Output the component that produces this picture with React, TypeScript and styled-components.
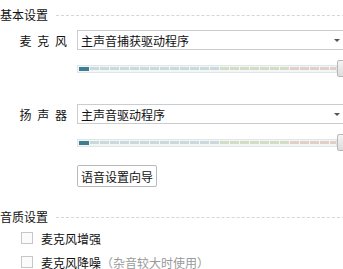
import React from "react";
import styled, { createGlobalStyle } from "styled-components";

const GlobalStyle = createGlobalStyle`
  html, body {
    margin: 0;
    padding: 0;
    background: #ffffff;
    overflow: hidden;
  }
  body {
    font-family: "Noto Sans CJK SC", "Liberation Sans", sans-serif;
    font-size: 12px;
    color: #111111;
  }
`;

const SEGMENTS = 26;

// colour of each faint segment drifts from blue-grey to green to pink
const segmentColor = (i: number) => {
  const t = i / (SEGMENTS - 1);
  if (t < 0.5) return "#c9d9dc";
  if (t < 0.8) return "#d3dcc4";
  return "#e2cfc8";
};

const LevelMeter = () => (
  <MeterRow>
    <Meter>
      <Active />
      {Array.from({ length: SEGMENTS }).map((_, i) => (
        <Segment key={i} style={{ background: segmentColor(i) }} />
      ))}
    </Meter>
    <Thumb />
  </MeterRow>
);

export default function App() {
  return (
    <>
      <GlobalStyle />
      <Page>
        <SectionHead>
          <HeadTitle>基本设置</HeadTitle>
          <Dashes />
        </SectionHead>

        <DeviceRow>
          <Label>麦 克 风</Label>
          <Select>
            <span>主声音捕获驱动程序</span>
            <Arrow />
          </Select>
        </DeviceRow>
        <LevelMeter />

        <DeviceRow $top={27}>
          <Label>扬 声 器</Label>
          <Select>
            <span>主声音驱动程序</span>
            <Arrow />
          </Select>
        </DeviceRow>
        <LevelMeter />

        <ButtonRow>
          <WizardButton>语音设置向导</WizardButton>
        </ButtonRow>

        <SectionHead $top={20}>
          <HeadTitle>音质设置</HeadTitle>
          <Dashes />
        </SectionHead>

        <CheckRow>
          <Box />
          <span>麦克风增强</span>
        </CheckRow>
        <CheckRow>
          <Box />
          <span>麦克风降噪</span>
          <Hint>（杂音较大时使用）</Hint>
        </CheckRow>
      </Page>
    </>
  );
}

const Page = styled.div`
  width: 360px;
  padding-top: 5px;
`;

const SectionHead = styled.div<{ $top?: number }>`
  display: flex;
  align-items: center;
  gap: 8px;
  height: 18px;
  margin-top: ${(p) => p.$top ?? 0}px;
`;

const HeadTitle = styled.span`
  white-space: nowrap;
`;

const Dashes = styled.div`
  flex: 1;
  border-top: 1px dashed #d6d6d6;
  margin-top: 2px;
`;

const DeviceRow = styled.div<{ $top?: number }>`
  display: flex;
  align-items: center;
  margin-top: ${(p) => p.$top ?? 7}px;
`;

const Label = styled.span`
  width: 67px;
  text-align: right;
  padding-right: 10px;
  box-sizing: content-box;
  white-space: pre;
  word-spacing: 3px;
`;

const Select = styled.div`
  width: 274px;
  height: 20px;
  box-sizing: border-box;
  border: 1px solid #c9cdd0;
  border-right: none;
  background: #ffffff;
  display: flex;
  align-items: center;
  justify-content: space-between;
  padding: 0 11px 0 3px;
`;

const Arrow = styled.span`
  width: 0;
  height: 0;
  border-left: 3px solid transparent;
  border-right: 3px solid transparent;
  border-top: 3px solid #555;
`;

const MeterRow = styled.div`
  display: flex;
  align-items: center;
  margin: 10px 0 0 77px;
  height: 17px;
`;

const Meter = styled.div`
  width: 260px;
  height: 8px;
  box-sizing: border-box;
  border: 1px solid #dfe6e8;
  background: #f3f6f6;
  display: flex;
  align-items: center;
  gap: 1px;
  padding: 0 1px;
  overflow: hidden;
`;

const Active = styled.div`
  flex: 0 0 10px;
  height: 4px;
  background: #3d7f91;
`;

const Segment = styled.div`
  flex: 0 0 9px;
  height: 3px;
`;

const Thumb = styled.div`
  width: 8px;
  height: 17px;
  box-sizing: border-box;
  border: 1px solid #b8b8b8;
  border-radius: 2px;
  background: linear-gradient(#f4f4f4, #dcdcdc);
`;

const ButtonRow = styled.div`
  margin: 14px 0 0 77px;
`;

const WizardButton = styled.button`
  font: inherit;
  color: #111111;
  height: 22px;
  padding: 0 3px;
  border: 1px solid #b9b9b9;
  border-radius: 2px;
  background: #ffffff;
`;

const CheckRow = styled.div`
  display: flex;
  align-items: center;
  height: 22px;
  padding-left: 21px;
  margin-top: 2px;
  &:first-of-type {
    margin-top: 1px;
  }
`;

const Box = styled.span`
  width: 12px;
  height: 12px;
  box-sizing: border-box;
  border: 1px solid #c3c7ca;
  background: #fbfbfb;
  margin-right: 8px;
`;

const Hint = styled.span`
  color: #9a9a9a;
`;
